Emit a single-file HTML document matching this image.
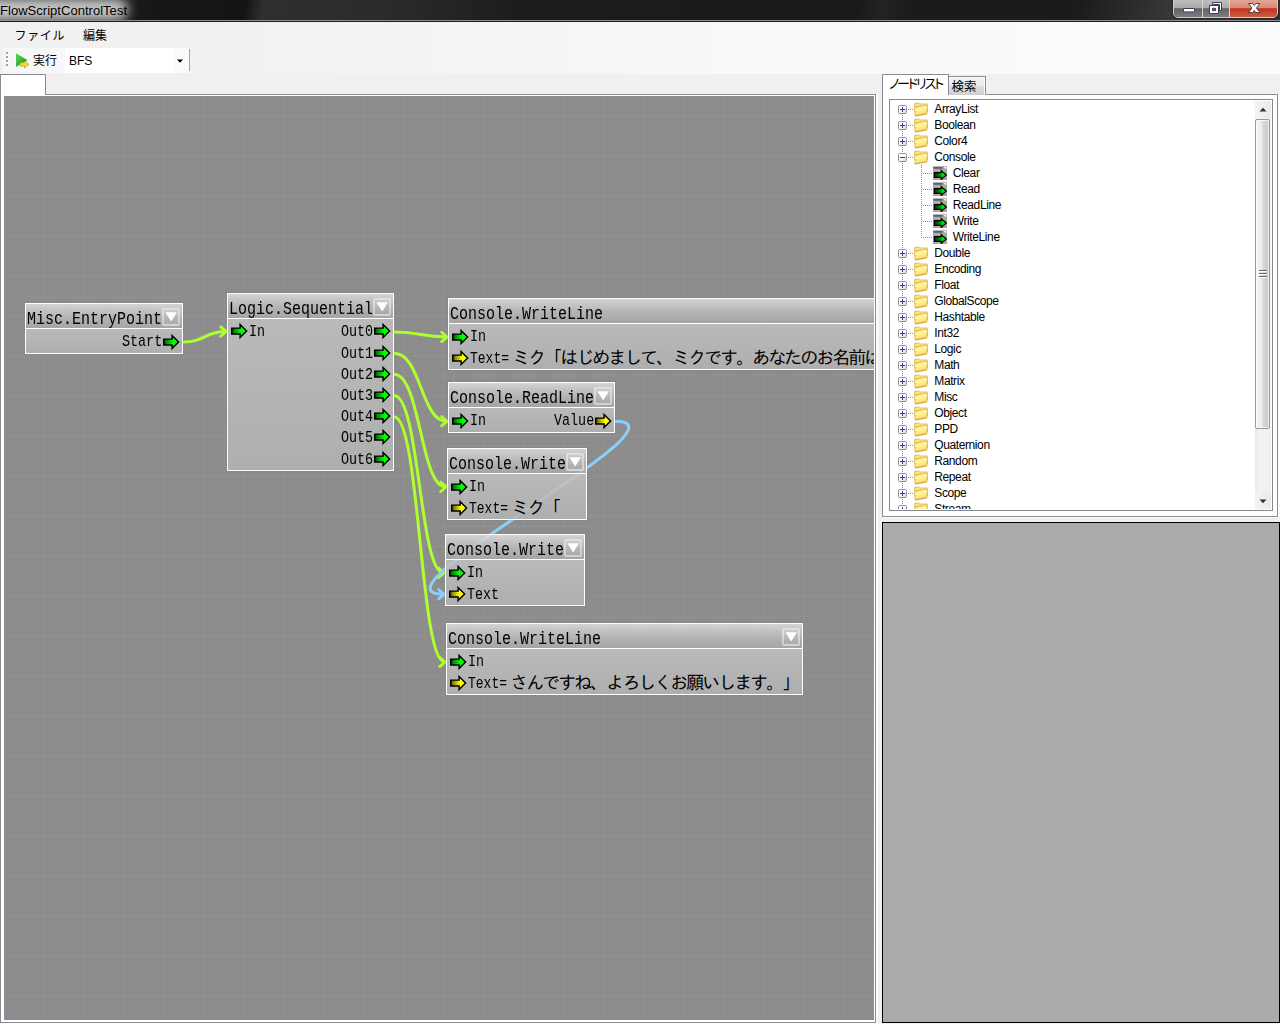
<!DOCTYPE html>
<html lang="ja"><head><meta charset="utf-8"><title>FlowScriptControlTest</title>
<style>
*{box-sizing:content-box;margin:0;padding:0}
html,body{width:1280px;height:1024px;overflow:hidden;background:#f0f0f0}
body{position:relative;font-family:"Liberation Sans","Noto Sans CJK JP",sans-serif;font-size:12px;color:#000}
.abs,#tb,#tb *,#menu,#tool,#tool *,#ltab,#lpage,#canvas,#rtab1,#rtab2,#rpage,#tree,#bottom{position:absolute}
/* title bar */
#tb{left:0;top:0;width:1280px;height:20px;overflow:hidden;
 background:linear-gradient(100deg,#2a2a2a 0,#171717 11.7%,#141414 19.2%,#2f2f2f 20.6%,#2b2b2b 30%,#1c1c1c 41%,#1a1a1a 67%,#232323 68.8%,#1b1b1b 71%,#1b1b1b 84%,#383838 91.5%,#2c2c2c 100%)}
#tbl1{left:0;top:20px;width:1280px;height:1px;background:#8d8d8d;position:absolute}
#tbl2{left:0;top:21px;width:1280px;height:1px;background:#1e1e1e;position:absolute}
#glow{left:-30px;top:-2px;width:158px;height:23px;border-radius:11px;background:rgba(255,255,255,.74);filter:blur(6px)}
#ttl{left:0;top:0;font-size:13px;line-height:21px;letter-spacing:.03px;white-space:nowrap}
#wb{left:1173px;top:-4px;width:103px;height:20px;border:1px solid rgba(255,255,255,.75);border-radius:0 0 5px 5px;box-shadow:0 0 0 1px #2a2a2a;overflow:hidden}
#wb div{top:0;height:21px}
#bmin{left:0;width:28px;background:linear-gradient(#c6c6c6 0,#a9a9a9 54%,#636366 55%,#808084 100%)}
#bmax{left:29px;width:26px;background:linear-gradient(#c6c6c6 0,#a9a9a9 54%,#636366 55%,#808084 100%)}
#bcls{left:56px;width:47px;background:linear-gradient(#e8b0a2 0,#d88775 54%,#bc3418 55%,#d0634a 100%)}
#wb i{position:absolute;top:0;width:1px;height:21px;background:rgba(255,255,255,.8)}
/* menu + toolbar */
#menu{left:0;top:22px;width:1280px;height:52px;background:linear-gradient(90deg,#f0f0f0 0,#f2f2f2 25%,#f8f8f8 55%,#fcfcfc 100%)}
.mi{position:absolute;top:3.5px;line-height:20px;white-space:nowrap}
#tool{left:3px;top:48px;width:186px;height:25px;background:linear-gradient(90deg,#f6f6f6,#fbfbfb);border-radius:3px 0 0 0}
#grip i{position:absolute;left:3px;width:2px;height:2px;background:#a0a0a0;box-shadow:1px 1px 0 #fff}
#combo{left:62px;top:0;width:109px;height:25px;background:#fff}
#cbtn{left:171px;top:0;width:12px;height:25px;background:#fbfbfb}
#sep{left:186px;top:1px;width:1px;height:22px;background:#a5a5a5}
/* tabs left */
#lpage{left:0;top:94px;width:874px;height:927px;border:1px solid #898c95;border-width:1px 1px 1px 1px;background:#fff}
#ltab{left:0;top:74px;width:44px;height:20px;border:1px solid #898c95;border-bottom:none;background:#fff}
#lsh{position:absolute;left:876px;top:95px;width:2px;height:929px;background:#fcfcfc}#lsh2{position:absolute;left:1px;top:1023px;width:877px;height:1px;background:#fcfcfc}
#canvas{left:4px;top:96px;width:870px;height:924px;overflow:hidden;background-color:#8c8c8c;
 background-image:linear-gradient(90deg,rgba(255,255,255,.017) 1px,transparent 1px,transparent 9px,rgba(255,255,255,.017) 9px),linear-gradient(180deg,rgba(255,255,255,.027) 1px,transparent 1px,transparent 9px,rgba(255,255,255,.027) 9px);
 background-size:10px 10px;background-position:0 0}
#wires{position:absolute;left:0;top:0}
/* nodes */
.node{position:absolute;border:1px solid #fff;overflow:hidden;box-shadow:0 0 0 1px rgba(0,0,0,.035)}
.hd{position:absolute;left:0;top:0;right:0;height:24px;background:linear-gradient(rgba(224,224,224,.84),rgba(187,187,187,.84) 55%,rgba(169,169,169,.84));border-bottom:1px solid #fff}
.bd{position:absolute;left:0;top:25px;right:0;background:linear-gradient(rgba(194,194,194,.84),rgba(181,181,181,.84))}
.m,.j{position:absolute;white-space:pre;line-height:24px;font-family:"Liberation Mono","IPAGothic",monospace;color:#000}
.m{transform:scaleX(.8);transform-origin:0 0}
.ar{position:absolute}
.dd{position:absolute;width:14px;height:14px;border:2px solid rgba(255,255,255,.42);border-radius:2px;background:linear-gradient(rgba(255,255,255,.12),rgba(255,255,255,0))}
.dd svg{position:absolute;left:-2px;top:-2px}
/* right tab control */
#rpage{left:882px;top:94px;width:394px;height:421px;border:1px solid #898c95;background:#fff}
#rtab1{left:882px;top:74px;width:65px;height:20px;border:1px solid #898c95;border-bottom:none;background:#fff}
#rtab2{left:948px;top:76px;width:37px;height:18px;border:1px solid #898c95;border-left:none;border-bottom:none;background:linear-gradient(#f2f2f2 0,#ebebeb 48%,#dddddd 52%,#cfcfcf 100%);box-shadow:inset 1px 1px 0 #fcfcfc,inset -1px 0 0 #fcfcfc}
.tt{position:absolute;white-space:nowrap;line-height:16px;font-size:12px}
#tree{left:889px;top:99px;width:382px;height:410px;border:1px solid #828790;background:#fff;overflow:hidden}
.tl{position:absolute;white-space:nowrap;font-size:12px;line-height:17px;letter-spacing:-.4px;height:16px}
.fo{position:absolute}
.pm{position:absolute;width:7px;height:7px;border:1px solid #919191;border-radius:1.5px;background:linear-gradient(135deg,#fff 0,#fff 40%,#d9d9d9 100%)}
.pm .h{position:absolute;left:1px;top:3px;width:5px;height:1px;background:#2b3f9e}
.pm .v{position:absolute;left:3px;top:1px;width:1px;height:5px;background:#2b3f9e}
.dh{position:absolute;height:1px;background-image:linear-gradient(90deg,#8a8a8a 1px,transparent 1px);background-size:2px 1px}
.dv{position:absolute;width:1px;background-image:linear-gradient(180deg,#8a8a8a 1px,transparent 1px);background-size:1px 2px}
#tin{position:absolute;left:1px;top:1px;width:363px;height:408px;overflow:hidden}
#sb{position:absolute;left:365px;top:1px;width:16px;height:408px;background:linear-gradient(90deg,#e9e9e9,#f3f3f3 30%,#f0f0f0)}
#sbup,#sbdn{position:absolute;left:0;width:16px;height:17px;background:linear-gradient(90deg,#f3f3f3,#eaeaea)}
#thumb{position:absolute;left:0;top:18px;width:13px;height:308px;border:1px solid #979797;border-radius:2px;background:linear-gradient(90deg,#f5f5f5 0,#ebebeb 45%,#d6d6d9 55%,#c9c9cc 100%);box-shadow:inset 0 0 0 1px rgba(255,255,255,.7)}
#rsh{position:absolute;left:1278px;top:95px;width:2px;height:423px;background:#fcfcfc}#rsh2{position:absolute;left:883px;top:517px;width:397px;height:1px;background:#fcfcfc}
#bottom{left:882px;top:522px;width:396px;height:499px;border:1px solid #000;background:#ababab}
</style></head><body>
<svg width="0" height="0" style="position:absolute"><defs>
<linearGradient id="gG" x1="0" x2="1" y1="0" y2="0"><stop offset="0" stop-color="#003800"/><stop offset=".18" stop-color="#008a00"/><stop offset=".62" stop-color="#00ff00"/><stop offset="1" stop-color="#00ff00"/></linearGradient>
<linearGradient id="gY" x1="0" x2="1" y1="0" y2="0"><stop offset="0" stop-color="#383800"/><stop offset=".18" stop-color="#8a8a00"/><stop offset=".62" stop-color="#ffff00"/><stop offset="1" stop-color="#ffff00"/></linearGradient>
<linearGradient id="gF" x1="0" x2=".25" y1="0" y2="1"><stop offset="0" stop-color="#fffcc8"/><stop offset=".5" stop-color="#fff39a"/><stop offset="1" stop-color="#f6d766"/></linearGradient><linearGradient id="gB" x1="0" x2="0" y1="0" y2="1"><stop offset="0" stop-color="#f2d462"/><stop offset="1" stop-color="#e2b040"/></linearGradient><linearGradient id="gG2" x1="0" x2="1" y1="0" y2="0"><stop offset="0" stop-color="#003000"/><stop offset=".3" stop-color="#006a00"/><stop offset=".78" stop-color="#00ee00"/><stop offset="1" stop-color="#00b400"/></linearGradient>
</defs></svg>
<!-- title bar -->
<div id="tb"><div id="glow"></div><div id="ttl">FlowScriptControlTest</div>
<div id="wb"><div id="bmin"></div><div id="bmax"></div><div id="bcls"></div><i style="left:28px"></i><i style="left:55px"></i>
<svg style="position:absolute;left:0;top:0" width="103" height="21" viewBox="0 0 103 21">
<rect x="9.5" y="11.5" width="11" height="3.4" rx=".6" fill="#fff" stroke="#3a3f55" stroke-width="1"/>
<path d="M38.5 5.5H47.5V13.5H45.5V7.5H38.5Z" fill="#fff" stroke="#3a3f55" stroke-width="1"/>
<path d="M35.5 8.5H44.5V16.5H35.5ZM38.5 11.3V13.7H41.5V11.3Z" fill="#fff" stroke="#3a3f55" stroke-width="1" fill-rule="evenodd"/>
<path d="M74.5 6.5H78.7L80.2 8.5L81.7 6.5H85.9L82.4 11L85.9 15.5H81.7L80.2 13.5L78.7 15.5H74.5L78 11Z" fill="#fff" stroke="#50404a" stroke-width="1" stroke-linejoin="round"/>
</svg></div></div>
<div id="tbl1"></div><div id="tbl2"></div>
<!-- menu & toolbar -->
<div id="menu"><span class="mi" style="left:14.6px;letter-spacing:.6px">ファイル</span><span class="mi" style="left:83px">編集</span></div>
<div id="tool"><div id="grip"><i style="top:4px"></i><i style="top:8px"></i><i style="top:12px"></i><i style="top:16px"></i></div>
<svg style="left:12px;top:4px" width="18" height="18" viewBox="0 0 18 18"><defs><linearGradient id="gP" x1="0" x2="1" y1="0" y2="1"><stop offset="0" stop-color="#5fd35f"/><stop offset="1" stop-color="#0a9a0a"/></linearGradient></defs>
<path d="M1 1.2L12.6 8.2L1 15Z" fill="url(#gP)"/><path d="M5.2 10.6H9.6V8.8L14 12.4L9.6 16V14.2H5.2Z" fill="#f2d936" stroke="#9a8a20" stroke-width=".5"/></svg>
<span class="mi" style="left:30px;top:3px">実行</span>
<div id="combo"><span class="mi" style="left:4px;top:3px">BFS</span></div><div id="cbtn"><svg style="left:2px;top:11px" width="8" height="5" viewBox="0 0 8 5"><path d="M1 .5H7L4 3.8Z" fill="#000"/></svg></div>
<div id="sep"></div></div>
<!-- left tab + canvas -->
<div id="lpage"></div><div id="ltab"></div><div id="lsh"></div><div id="lsh2"></div>
<div id="canvas">
<svg id="wires" width="870" height="924" viewBox="0 0 870 924"><path d="M179.0 246.0C201.0 246.0 201.0 235.6 221.5 235.6" stroke="#adff2f" stroke-width="3" fill="none"/><path d="M216.6 230.9L222.2 235.6L216.6 240.3" stroke="#adff2f" stroke-width="2.8" fill="none" stroke-linecap="round" stroke-linejoin="miter"/><path d="M390.0 236.0C417.0 236.0 417.0 240.9 442.5 240.9" stroke="#adff2f" stroke-width="3" fill="none"/><path d="M437.6 236.2L443.2 240.9L437.6 245.6" stroke="#adff2f" stroke-width="2.8" fill="none" stroke-linecap="round" stroke-linejoin="miter"/><path d="M390.0 257.2C417.0 257.2 417.0 325.2 442.5 325.2" stroke="#adff2f" stroke-width="3" fill="none"/><path d="M437.6 320.5L443.2 325.2L437.6 329.9" stroke="#adff2f" stroke-width="2.8" fill="none" stroke-linecap="round" stroke-linejoin="miter"/><path d="M390.0 278.3C416.5 278.3 416.5 390.8 441.5 390.8" stroke="#adff2f" stroke-width="3" fill="none"/><path d="M436.6 386.1L442.2 390.8L436.6 395.5" stroke="#adff2f" stroke-width="2.8" fill="none" stroke-linecap="round" stroke-linejoin="miter"/><path d="M390.0 299.5C415.5 299.5 415.5 476.8 439.5 476.8" stroke="#adff2f" stroke-width="3" fill="none"/><path d="M434.6 472.1L440.2 476.8L434.6 481.5" stroke="#adff2f" stroke-width="2.8" fill="none" stroke-linecap="round" stroke-linejoin="miter"/><path d="M390.0 320.7C416.0 320.7 416.0 565.9 440.5 565.9" stroke="#adff2f" stroke-width="3" fill="none"/><path d="M435.6 561.2L441.2 565.9L435.6 570.6" stroke="#adff2f" stroke-width="2.8" fill="none" stroke-linecap="round" stroke-linejoin="miter"/><path d="M611.0 325.2C696.0 325.2 356.0 498.2 439.5 498.2" stroke="#8ad0fc" stroke-width="3" fill="none"/><path d="M434.6 493.5L440.2 498.2L434.6 502.9" stroke="#8ad0fc" stroke-width="2.8" fill="none" stroke-linecap="round" stroke-linejoin="miter"/></svg>
<div class="node" style="left:21px;top:207px;width:156px;height:49px"><div class="hd"></div><div class="bd" style="height:24px"></div><span class="m t" style="left:0.90px;top:4px;font-size:18.747px;line-height:22.008px">Misc.EntryPoint</span><div class="dd" style="left:136px;top:4px"><svg width="18" height="18" viewBox="0 0 18 18"><path d="M3.4 4.2H15L9.2 13.4Z" fill="#fff"/></svg></div><svg class="ar" style="left:136.8px;top:28.8px" width="18" height="18" viewBox="0 0 18 18"><path d="M.7 6.1H9.1V2.6L15.6 9L9.1 15.4V11.9H.7Z" fill="url(#gG)" stroke="#000" stroke-width="1.45" stroke-linejoin="miter"/></svg><span class="m " style="left:96.25px;top:26px;font-size:16.768px;line-height:23.063px">Start</span></div>
<div class="node" style="left:223px;top:197px;width:165px;height:176px"><div class="hd"></div><div class="bd" style="height:151px"></div><span class="m t" style="left:0.90px;top:4px;font-size:18.747px;line-height:22.008px">Logic.Sequential</span><div class="dd" style="left:145px;top:4px"><svg width="18" height="18" viewBox="0 0 18 18"><path d="M3.4 4.2H15L9.2 13.4Z" fill="#fff"/></svg></div><svg class="ar" style="left:3.1px;top:28.3px" width="18" height="18" viewBox="0 0 18 18"><path d="M.7 6.1H9.1V2.6L15.6 9L9.1 15.4V11.9H.7Z" fill="url(#gG)" stroke="#000" stroke-width="1.45" stroke-linejoin="miter"/></svg><span class="m " style="left:20.50px;top:26px;font-size:16.664px;line-height:23.118px">In</span><svg class="ar" style="left:145.8px;top:28.3px" width="18" height="18" viewBox="0 0 18 18"><path d="M.7 6.1H9.1V2.6L15.6 9L9.1 15.4V11.9H.7Z" fill="url(#gG)" stroke="#000" stroke-width="1.45" stroke-linejoin="miter"/></svg><span class="m " style="left:113.30px;top:26px;font-size:16.768px;line-height:23.063px">Out0</span><svg class="ar" style="left:145.8px;top:49.6px" width="18" height="18" viewBox="0 0 18 18"><path d="M.7 6.1H9.1V2.6L15.6 9L9.1 15.4V11.9H.7Z" fill="url(#gG)" stroke="#000" stroke-width="1.45" stroke-linejoin="miter"/></svg><span class="m " style="left:113.30px;top:48px;font-size:16.768px;line-height:23.063px">Out1</span><svg class="ar" style="left:145.8px;top:70.8px" width="18" height="18" viewBox="0 0 18 18"><path d="M.7 6.1H9.1V2.6L15.6 9L9.1 15.4V11.9H.7Z" fill="url(#gG)" stroke="#000" stroke-width="1.45" stroke-linejoin="miter"/></svg><span class="m " style="left:113.30px;top:69px;font-size:16.768px;line-height:23.063px">Out2</span><svg class="ar" style="left:145.8px;top:92.0px" width="18" height="18" viewBox="0 0 18 18"><path d="M.7 6.1H9.1V2.6L15.6 9L9.1 15.4V11.9H.7Z" fill="url(#gG)" stroke="#000" stroke-width="1.45" stroke-linejoin="miter"/></svg><span class="m " style="left:113.30px;top:90px;font-size:16.768px;line-height:23.063px">Out3</span><svg class="ar" style="left:145.8px;top:113.2px" width="18" height="18" viewBox="0 0 18 18"><path d="M.7 6.1H9.1V2.6L15.6 9L9.1 15.4V11.9H.7Z" fill="url(#gG)" stroke="#000" stroke-width="1.45" stroke-linejoin="miter"/></svg><span class="m " style="left:113.30px;top:111px;font-size:16.768px;line-height:23.063px">Out4</span><svg class="ar" style="left:145.8px;top:134.4px" width="18" height="18" viewBox="0 0 18 18"><path d="M.7 6.1H9.1V2.6L15.6 9L9.1 15.4V11.9H.7Z" fill="url(#gG)" stroke="#000" stroke-width="1.45" stroke-linejoin="miter"/></svg><span class="m " style="left:113.30px;top:132px;font-size:16.768px;line-height:23.063px">Out5</span><svg class="ar" style="left:145.8px;top:155.6px" width="18" height="18" viewBox="0 0 18 18"><path d="M.7 6.1H9.1V2.6L15.6 9L9.1 15.4V11.9H.7Z" fill="url(#gG)" stroke="#000" stroke-width="1.45" stroke-linejoin="miter"/></svg><span class="m " style="left:113.30px;top:154px;font-size:16.768px;line-height:23.063px">Out6</span></div>
<div class="node" style="left:444px;top:202px;width:518px;height:70px"><div class="hd"></div><div class="bd" style="height:45px"></div><span class="m t" style="left:0.90px;top:4px;font-size:18.747px;line-height:22.008px">Console.WriteLine</span><div class="dd" style="left:498px;top:4px"><svg width="18" height="18" viewBox="0 0 18 18"><path d="M3.4 4.2H15L9.2 13.4Z" fill="#fff"/></svg></div><svg class="ar" style="left:3.1px;top:28.6px" width="18" height="18" viewBox="0 0 18 18"><path d="M.7 6.1H9.1V2.6L15.6 9L9.1 15.4V11.9H.7Z" fill="url(#gG)" stroke="#000" stroke-width="1.45" stroke-linejoin="miter"/></svg><span class="m " style="left:20.50px;top:26px;font-size:16.664px;line-height:23.118px">In</span><svg class="ar" style="left:3.1px;top:49.9px" width="18" height="18" viewBox="0 0 18 18"><path d="M.7 6.1H9.1V2.6L15.6 9L9.1 15.4V11.9H.7Z" fill="url(#gY)" stroke="#000" stroke-width="1.45" stroke-linejoin="miter"/></svg><span class="m " style="left:20.50px;top:48px;font-size:16.247px;line-height:23.340px">Text= </span><span class="j" style="left:63.30px;top:49px;font-size:18.000px;line-height:22.406px;letter-spacing:-2.00px">ミク「はじめまして、ミクです。あなたのお名前は</span></div>
<div class="node" style="left:444px;top:286px;width:165px;height:49px"><div class="hd"></div><div class="bd" style="height:24px"></div><span class="m t" style="left:0.90px;top:4px;font-size:18.747px;line-height:22.008px">Console.ReadLine</span><div class="dd" style="left:145px;top:4px"><svg width="18" height="18" viewBox="0 0 18 18"><path d="M3.4 4.2H15L9.2 13.4Z" fill="#fff"/></svg></div><svg class="ar" style="left:3.1px;top:28.9px" width="18" height="18" viewBox="0 0 18 18"><path d="M.7 6.1H9.1V2.6L15.6 9L9.1 15.4V11.9H.7Z" fill="url(#gG)" stroke="#000" stroke-width="1.45" stroke-linejoin="miter"/></svg><span class="m " style="left:20.50px;top:26px;font-size:16.664px;line-height:23.118px">In</span><svg class="ar" style="left:145.8px;top:28.9px" width="18" height="18" viewBox="0 0 18 18"><path d="M.7 6.1H9.1V2.6L15.6 9L9.1 15.4V11.9H.7Z" fill="url(#gY)" stroke="#000" stroke-width="1.45" stroke-linejoin="miter"/></svg><span class="m " style="left:105.25px;top:26px;font-size:16.768px;line-height:23.063px">Value</span></div>
<div class="node" style="left:443px;top:352px;width:138px;height:70px"><div class="hd"></div><div class="bd" style="height:45px"></div><span class="m t" style="left:0.90px;top:4px;font-size:18.747px;line-height:22.008px">Console.Write</span><div class="dd" style="left:118px;top:4px"><svg width="18" height="18" viewBox="0 0 18 18"><path d="M3.4 4.2H15L9.2 13.4Z" fill="#fff"/></svg></div><svg class="ar" style="left:3.1px;top:28.5px" width="18" height="18" viewBox="0 0 18 18"><path d="M.7 6.1H9.1V2.6L15.6 9L9.1 15.4V11.9H.7Z" fill="url(#gG)" stroke="#000" stroke-width="1.45" stroke-linejoin="miter"/></svg><span class="m " style="left:20.50px;top:26px;font-size:16.664px;line-height:23.118px">In</span><svg class="ar" style="left:3.1px;top:49.9px" width="18" height="18" viewBox="0 0 18 18"><path d="M.7 6.1H9.1V2.6L15.6 9L9.1 15.4V11.9H.7Z" fill="url(#gY)" stroke="#000" stroke-width="1.45" stroke-linejoin="miter"/></svg><span class="m " style="left:20.50px;top:48px;font-size:16.247px;line-height:23.340px">Text= </span><span class="j" style="left:63.30px;top:49px;font-size:18.000px;line-height:22.406px;letter-spacing:-2.00px">ミク「</span></div>
<div class="node" style="left:441px;top:438px;width:138px;height:70px"><div class="hd"></div><div class="bd" style="height:45px"></div><span class="m t" style="left:0.90px;top:4px;font-size:18.747px;line-height:22.008px">Console.Write</span><div class="dd" style="left:118px;top:4px"><svg width="18" height="18" viewBox="0 0 18 18"><path d="M3.4 4.2H15L9.2 13.4Z" fill="#fff"/></svg></div><svg class="ar" style="left:3.1px;top:28.5px" width="18" height="18" viewBox="0 0 18 18"><path d="M.7 6.1H9.1V2.6L15.6 9L9.1 15.4V11.9H.7Z" fill="url(#gG)" stroke="#000" stroke-width="1.45" stroke-linejoin="miter"/></svg><span class="m " style="left:20.50px;top:26px;font-size:16.664px;line-height:23.118px">In</span><svg class="ar" style="left:3.1px;top:49.9px" width="18" height="18" viewBox="0 0 18 18"><path d="M.7 6.1H9.1V2.6L15.6 9L9.1 15.4V11.9H.7Z" fill="url(#gY)" stroke="#000" stroke-width="1.45" stroke-linejoin="miter"/></svg><span class="m " style="left:20.50px;top:48px;font-size:16.664px;line-height:23.118px">Text</span></div>
<div class="node" style="left:442px;top:527px;width:355px;height:70px"><div class="hd"></div><div class="bd" style="height:45px"></div><span class="m t" style="left:0.90px;top:4px;font-size:18.747px;line-height:22.008px">Console.WriteLine</span><div class="dd" style="left:335px;top:4px"><svg width="18" height="18" viewBox="0 0 18 18"><path d="M3.4 4.2H15L9.2 13.4Z" fill="#fff"/></svg></div><svg class="ar" style="left:3.1px;top:28.6px" width="18" height="18" viewBox="0 0 18 18"><path d="M.7 6.1H9.1V2.6L15.6 9L9.1 15.4V11.9H.7Z" fill="url(#gG)" stroke="#000" stroke-width="1.45" stroke-linejoin="miter"/></svg><span class="m " style="left:20.50px;top:26px;font-size:16.664px;line-height:23.118px">In</span><svg class="ar" style="left:3.1px;top:50.0px" width="18" height="18" viewBox="0 0 18 18"><path d="M.7 6.1H9.1V2.6L15.6 9L9.1 15.4V11.9H.7Z" fill="url(#gY)" stroke="#000" stroke-width="1.45" stroke-linejoin="miter"/></svg><span class="m " style="left:20.50px;top:48px;font-size:16.247px;line-height:23.340px">Text= </span><span class="j" style="left:63.30px;top:49px;font-size:18.000px;line-height:22.406px;letter-spacing:-2.00px">さんですね、よろしくお願いします。」</span></div>
</div>
<!-- right tab control -->
<div id="rpage"></div><div id="rtab2"><span class="tt" style="left:3.5px;top:1.5px;font-size:12.5px">検索</span></div>
<div id="rtab1"><span class="tt" style="left:6px;top:1px;font-size:13px;font-feature-settings:'palt';letter-spacing:-2.1px">ノードリスト</span></div>
<div id="tree"><div id="tin"><div class="dv" style="left:11px;top:14px;height:6px"></div><div class="dv" style="left:11px;top:30px;height:6px"></div><div class="dv" style="left:11px;top:46px;height:6px"></div><div class="dv" style="left:11px;top:62px;height:86px"></div><div class="dv" style="left:11px;top:158px;height:6px"></div><div class="dv" style="left:11px;top:174px;height:6px"></div><div class="dv" style="left:11px;top:190px;height:6px"></div><div class="dv" style="left:11px;top:206px;height:6px"></div><div class="dv" style="left:11px;top:222px;height:6px"></div><div class="dv" style="left:11px;top:238px;height:6px"></div><div class="dv" style="left:11px;top:254px;height:6px"></div><div class="dv" style="left:11px;top:270px;height:6px"></div><div class="dv" style="left:11px;top:286px;height:6px"></div><div class="dv" style="left:11px;top:302px;height:6px"></div><div class="dv" style="left:11px;top:318px;height:6px"></div><div class="dv" style="left:11px;top:334px;height:6px"></div><div class="dv" style="left:11px;top:350px;height:6px"></div><div class="dv" style="left:11px;top:366px;height:6px"></div><div class="dv" style="left:11px;top:382px;height:6px"></div><div class="dv" style="left:11px;top:398px;height:6px"></div><div class="dv" style="left:30px;top:64px;height:73px"></div><div class="pm" style="left:7px;top:4px"><i class="h"></i><i class="v"></i></div><div class="dh" style="left:17px;top:8px;width:6px"></div><svg class="fo" style="left:22px;top:0px" width="16" height="17" viewBox="0 0 16 17"><path d="M1.5 6V2.7L2.1 2H6.2L7 2.8H14L14.5 3.4V11H1.5Z" fill="url(#gB)" stroke="#d9a638" stroke-width=".4"/><path d="M2.3 3.5V2.9H5.9L6.5 3.7H13.6V4.8H2.3Z" fill="#fbe98e" opacity=".9"/><path d="M1.8 6.6L14.3 4.1L14.1 12.6L2.1 15Z" fill="url(#gF)" stroke="#e0b040" stroke-width=".7" stroke-linejoin="round"/><path d="M2.1 15.1L14.1 12.7" stroke="#cf9a2c" stroke-width=".8" fill="none"/></svg><span class="tl" style="left:43.3px;top:0px">ArrayList</span><div class="pm" style="left:7px;top:20px"><i class="h"></i><i class="v"></i></div><div class="dh" style="left:17px;top:24px;width:6px"></div><svg class="fo" style="left:22px;top:16px" width="16" height="17" viewBox="0 0 16 17"><path d="M1.5 6V2.7L2.1 2H6.2L7 2.8H14L14.5 3.4V11H1.5Z" fill="url(#gB)" stroke="#d9a638" stroke-width=".4"/><path d="M2.3 3.5V2.9H5.9L6.5 3.7H13.6V4.8H2.3Z" fill="#fbe98e" opacity=".9"/><path d="M1.8 6.6L14.3 4.1L14.1 12.6L2.1 15Z" fill="url(#gF)" stroke="#e0b040" stroke-width=".7" stroke-linejoin="round"/><path d="M2.1 15.1L14.1 12.7" stroke="#cf9a2c" stroke-width=".8" fill="none"/></svg><span class="tl" style="left:43.3px;top:16px">Boolean</span><div class="pm" style="left:7px;top:36px"><i class="h"></i><i class="v"></i></div><div class="dh" style="left:17px;top:40px;width:6px"></div><svg class="fo" style="left:22px;top:32px" width="16" height="17" viewBox="0 0 16 17"><path d="M1.5 6V2.7L2.1 2H6.2L7 2.8H14L14.5 3.4V11H1.5Z" fill="url(#gB)" stroke="#d9a638" stroke-width=".4"/><path d="M2.3 3.5V2.9H5.9L6.5 3.7H13.6V4.8H2.3Z" fill="#fbe98e" opacity=".9"/><path d="M1.8 6.6L14.3 4.1L14.1 12.6L2.1 15Z" fill="url(#gF)" stroke="#e0b040" stroke-width=".7" stroke-linejoin="round"/><path d="M2.1 15.1L14.1 12.7" stroke="#cf9a2c" stroke-width=".8" fill="none"/></svg><span class="tl" style="left:43.3px;top:32px">Color4</span><div class="pm" style="left:7px;top:52px"><i class="h"></i></div><div class="dh" style="left:17px;top:56px;width:6px"></div><svg class="fo" style="left:22px;top:48px" width="16" height="17" viewBox="0 0 16 17"><path d="M1.5 6V2.7L2.1 2H6.2L7 2.8H14L14.5 3.4V11H1.5Z" fill="url(#gB)" stroke="#d9a638" stroke-width=".4"/><path d="M2.3 3.5V2.9H5.9L6.5 3.7H13.6V4.8H2.3Z" fill="#fbe98e" opacity=".9"/><path d="M1.8 6.6L14.3 4.1L14.1 12.6L2.1 15Z" fill="url(#gF)" stroke="#e0b040" stroke-width=".7" stroke-linejoin="round"/><path d="M2.1 15.1L14.1 12.7" stroke="#cf9a2c" stroke-width=".8" fill="none"/></svg><span class="tl" style="left:43.3px;top:48px">Console</span><div class="dh" style="left:32px;top:72px;width:10px"></div><svg class="fo" style="left:42px;top:65px" width="14" height="14" viewBox="0 0 14 14"><rect width="14" height="14" fill="#a6a6a6"/><rect y="0" width="14" height="1" fill="#bababa"/><rect x=".3" y="1.2" width="9.2" height="1.4" fill="#505050"/><path d="M10.6 1H13.4V2.8H12Z" fill="#f2f2f2"/><rect x="1" y="4" width="7" height="1" fill="#b4b4b4"/><rect x="1" y="12.4" width="7" height="1" fill="#b4b4b4"/><path d="M1.4 6.6H8.2V4.6L13.4 9L8.2 13.4V11.4H1.4Z" fill="url(#gG2)" stroke="#0a000a" stroke-width="1.25" stroke-linejoin="miter"/></svg><span class="tl" style="left:61.8px;top:64px">Clear</span><div class="dh" style="left:32px;top:88px;width:10px"></div><svg class="fo" style="left:42px;top:81px" width="14" height="14" viewBox="0 0 14 14"><rect width="14" height="14" fill="#a6a6a6"/><rect y="0" width="14" height="1" fill="#bababa"/><rect x=".3" y="1.2" width="9.2" height="1.4" fill="#505050"/><path d="M10.6 1H13.4V2.8H12Z" fill="#f2f2f2"/><rect x="1" y="4" width="7" height="1" fill="#b4b4b4"/><rect x="1" y="12.4" width="7" height="1" fill="#b4b4b4"/><path d="M1.4 6.6H8.2V4.6L13.4 9L8.2 13.4V11.4H1.4Z" fill="url(#gG2)" stroke="#0a000a" stroke-width="1.25" stroke-linejoin="miter"/></svg><span class="tl" style="left:61.8px;top:80px">Read</span><div class="dh" style="left:32px;top:104px;width:10px"></div><svg class="fo" style="left:42px;top:97px" width="14" height="14" viewBox="0 0 14 14"><rect width="14" height="14" fill="#a6a6a6"/><rect y="0" width="14" height="1" fill="#bababa"/><rect x=".3" y="1.2" width="9.2" height="1.4" fill="#505050"/><path d="M10.6 1H13.4V2.8H12Z" fill="#f2f2f2"/><rect x="1" y="4" width="7" height="1" fill="#b4b4b4"/><rect x="1" y="12.4" width="7" height="1" fill="#b4b4b4"/><path d="M1.4 6.6H8.2V4.6L13.4 9L8.2 13.4V11.4H1.4Z" fill="url(#gG2)" stroke="#0a000a" stroke-width="1.25" stroke-linejoin="miter"/></svg><span class="tl" style="left:61.8px;top:96px">ReadLine</span><div class="dh" style="left:32px;top:120px;width:10px"></div><svg class="fo" style="left:42px;top:113px" width="14" height="14" viewBox="0 0 14 14"><rect width="14" height="14" fill="#a6a6a6"/><rect y="0" width="14" height="1" fill="#bababa"/><rect x=".3" y="1.2" width="9.2" height="1.4" fill="#505050"/><path d="M10.6 1H13.4V2.8H12Z" fill="#f2f2f2"/><rect x="1" y="4" width="7" height="1" fill="#b4b4b4"/><rect x="1" y="12.4" width="7" height="1" fill="#b4b4b4"/><path d="M1.4 6.6H8.2V4.6L13.4 9L8.2 13.4V11.4H1.4Z" fill="url(#gG2)" stroke="#0a000a" stroke-width="1.25" stroke-linejoin="miter"/></svg><span class="tl" style="left:61.8px;top:112px">Write</span><div class="dh" style="left:32px;top:136px;width:10px"></div><svg class="fo" style="left:42px;top:129px" width="14" height="14" viewBox="0 0 14 14"><rect width="14" height="14" fill="#a6a6a6"/><rect y="0" width="14" height="1" fill="#bababa"/><rect x=".3" y="1.2" width="9.2" height="1.4" fill="#505050"/><path d="M10.6 1H13.4V2.8H12Z" fill="#f2f2f2"/><rect x="1" y="4" width="7" height="1" fill="#b4b4b4"/><rect x="1" y="12.4" width="7" height="1" fill="#b4b4b4"/><path d="M1.4 6.6H8.2V4.6L13.4 9L8.2 13.4V11.4H1.4Z" fill="url(#gG2)" stroke="#0a000a" stroke-width="1.25" stroke-linejoin="miter"/></svg><span class="tl" style="left:61.8px;top:128px">WriteLine</span><div class="pm" style="left:7px;top:148px"><i class="h"></i><i class="v"></i></div><div class="dh" style="left:17px;top:152px;width:6px"></div><svg class="fo" style="left:22px;top:144px" width="16" height="17" viewBox="0 0 16 17"><path d="M1.5 6V2.7L2.1 2H6.2L7 2.8H14L14.5 3.4V11H1.5Z" fill="url(#gB)" stroke="#d9a638" stroke-width=".4"/><path d="M2.3 3.5V2.9H5.9L6.5 3.7H13.6V4.8H2.3Z" fill="#fbe98e" opacity=".9"/><path d="M1.8 6.6L14.3 4.1L14.1 12.6L2.1 15Z" fill="url(#gF)" stroke="#e0b040" stroke-width=".7" stroke-linejoin="round"/><path d="M2.1 15.1L14.1 12.7" stroke="#cf9a2c" stroke-width=".8" fill="none"/></svg><span class="tl" style="left:43.3px;top:144px">Double</span><div class="pm" style="left:7px;top:164px"><i class="h"></i><i class="v"></i></div><div class="dh" style="left:17px;top:168px;width:6px"></div><svg class="fo" style="left:22px;top:160px" width="16" height="17" viewBox="0 0 16 17"><path d="M1.5 6V2.7L2.1 2H6.2L7 2.8H14L14.5 3.4V11H1.5Z" fill="url(#gB)" stroke="#d9a638" stroke-width=".4"/><path d="M2.3 3.5V2.9H5.9L6.5 3.7H13.6V4.8H2.3Z" fill="#fbe98e" opacity=".9"/><path d="M1.8 6.6L14.3 4.1L14.1 12.6L2.1 15Z" fill="url(#gF)" stroke="#e0b040" stroke-width=".7" stroke-linejoin="round"/><path d="M2.1 15.1L14.1 12.7" stroke="#cf9a2c" stroke-width=".8" fill="none"/></svg><span class="tl" style="left:43.3px;top:160px">Encoding</span><div class="pm" style="left:7px;top:180px"><i class="h"></i><i class="v"></i></div><div class="dh" style="left:17px;top:184px;width:6px"></div><svg class="fo" style="left:22px;top:176px" width="16" height="17" viewBox="0 0 16 17"><path d="M1.5 6V2.7L2.1 2H6.2L7 2.8H14L14.5 3.4V11H1.5Z" fill="url(#gB)" stroke="#d9a638" stroke-width=".4"/><path d="M2.3 3.5V2.9H5.9L6.5 3.7H13.6V4.8H2.3Z" fill="#fbe98e" opacity=".9"/><path d="M1.8 6.6L14.3 4.1L14.1 12.6L2.1 15Z" fill="url(#gF)" stroke="#e0b040" stroke-width=".7" stroke-linejoin="round"/><path d="M2.1 15.1L14.1 12.7" stroke="#cf9a2c" stroke-width=".8" fill="none"/></svg><span class="tl" style="left:43.3px;top:176px">Float</span><div class="pm" style="left:7px;top:196px"><i class="h"></i><i class="v"></i></div><div class="dh" style="left:17px;top:200px;width:6px"></div><svg class="fo" style="left:22px;top:192px" width="16" height="17" viewBox="0 0 16 17"><path d="M1.5 6V2.7L2.1 2H6.2L7 2.8H14L14.5 3.4V11H1.5Z" fill="url(#gB)" stroke="#d9a638" stroke-width=".4"/><path d="M2.3 3.5V2.9H5.9L6.5 3.7H13.6V4.8H2.3Z" fill="#fbe98e" opacity=".9"/><path d="M1.8 6.6L14.3 4.1L14.1 12.6L2.1 15Z" fill="url(#gF)" stroke="#e0b040" stroke-width=".7" stroke-linejoin="round"/><path d="M2.1 15.1L14.1 12.7" stroke="#cf9a2c" stroke-width=".8" fill="none"/></svg><span class="tl" style="left:43.3px;top:192px">GlobalScope</span><div class="pm" style="left:7px;top:212px"><i class="h"></i><i class="v"></i></div><div class="dh" style="left:17px;top:216px;width:6px"></div><svg class="fo" style="left:22px;top:208px" width="16" height="17" viewBox="0 0 16 17"><path d="M1.5 6V2.7L2.1 2H6.2L7 2.8H14L14.5 3.4V11H1.5Z" fill="url(#gB)" stroke="#d9a638" stroke-width=".4"/><path d="M2.3 3.5V2.9H5.9L6.5 3.7H13.6V4.8H2.3Z" fill="#fbe98e" opacity=".9"/><path d="M1.8 6.6L14.3 4.1L14.1 12.6L2.1 15Z" fill="url(#gF)" stroke="#e0b040" stroke-width=".7" stroke-linejoin="round"/><path d="M2.1 15.1L14.1 12.7" stroke="#cf9a2c" stroke-width=".8" fill="none"/></svg><span class="tl" style="left:43.3px;top:208px">Hashtable</span><div class="pm" style="left:7px;top:228px"><i class="h"></i><i class="v"></i></div><div class="dh" style="left:17px;top:232px;width:6px"></div><svg class="fo" style="left:22px;top:224px" width="16" height="17" viewBox="0 0 16 17"><path d="M1.5 6V2.7L2.1 2H6.2L7 2.8H14L14.5 3.4V11H1.5Z" fill="url(#gB)" stroke="#d9a638" stroke-width=".4"/><path d="M2.3 3.5V2.9H5.9L6.5 3.7H13.6V4.8H2.3Z" fill="#fbe98e" opacity=".9"/><path d="M1.8 6.6L14.3 4.1L14.1 12.6L2.1 15Z" fill="url(#gF)" stroke="#e0b040" stroke-width=".7" stroke-linejoin="round"/><path d="M2.1 15.1L14.1 12.7" stroke="#cf9a2c" stroke-width=".8" fill="none"/></svg><span class="tl" style="left:43.3px;top:224px">Int32</span><div class="pm" style="left:7px;top:244px"><i class="h"></i><i class="v"></i></div><div class="dh" style="left:17px;top:248px;width:6px"></div><svg class="fo" style="left:22px;top:240px" width="16" height="17" viewBox="0 0 16 17"><path d="M1.5 6V2.7L2.1 2H6.2L7 2.8H14L14.5 3.4V11H1.5Z" fill="url(#gB)" stroke="#d9a638" stroke-width=".4"/><path d="M2.3 3.5V2.9H5.9L6.5 3.7H13.6V4.8H2.3Z" fill="#fbe98e" opacity=".9"/><path d="M1.8 6.6L14.3 4.1L14.1 12.6L2.1 15Z" fill="url(#gF)" stroke="#e0b040" stroke-width=".7" stroke-linejoin="round"/><path d="M2.1 15.1L14.1 12.7" stroke="#cf9a2c" stroke-width=".8" fill="none"/></svg><span class="tl" style="left:43.3px;top:240px">Logic</span><div class="pm" style="left:7px;top:260px"><i class="h"></i><i class="v"></i></div><div class="dh" style="left:17px;top:264px;width:6px"></div><svg class="fo" style="left:22px;top:256px" width="16" height="17" viewBox="0 0 16 17"><path d="M1.5 6V2.7L2.1 2H6.2L7 2.8H14L14.5 3.4V11H1.5Z" fill="url(#gB)" stroke="#d9a638" stroke-width=".4"/><path d="M2.3 3.5V2.9H5.9L6.5 3.7H13.6V4.8H2.3Z" fill="#fbe98e" opacity=".9"/><path d="M1.8 6.6L14.3 4.1L14.1 12.6L2.1 15Z" fill="url(#gF)" stroke="#e0b040" stroke-width=".7" stroke-linejoin="round"/><path d="M2.1 15.1L14.1 12.7" stroke="#cf9a2c" stroke-width=".8" fill="none"/></svg><span class="tl" style="left:43.3px;top:256px">Math</span><div class="pm" style="left:7px;top:276px"><i class="h"></i><i class="v"></i></div><div class="dh" style="left:17px;top:280px;width:6px"></div><svg class="fo" style="left:22px;top:272px" width="16" height="17" viewBox="0 0 16 17"><path d="M1.5 6V2.7L2.1 2H6.2L7 2.8H14L14.5 3.4V11H1.5Z" fill="url(#gB)" stroke="#d9a638" stroke-width=".4"/><path d="M2.3 3.5V2.9H5.9L6.5 3.7H13.6V4.8H2.3Z" fill="#fbe98e" opacity=".9"/><path d="M1.8 6.6L14.3 4.1L14.1 12.6L2.1 15Z" fill="url(#gF)" stroke="#e0b040" stroke-width=".7" stroke-linejoin="round"/><path d="M2.1 15.1L14.1 12.7" stroke="#cf9a2c" stroke-width=".8" fill="none"/></svg><span class="tl" style="left:43.3px;top:272px">Matrix</span><div class="pm" style="left:7px;top:292px"><i class="h"></i><i class="v"></i></div><div class="dh" style="left:17px;top:296px;width:6px"></div><svg class="fo" style="left:22px;top:288px" width="16" height="17" viewBox="0 0 16 17"><path d="M1.5 6V2.7L2.1 2H6.2L7 2.8H14L14.5 3.4V11H1.5Z" fill="url(#gB)" stroke="#d9a638" stroke-width=".4"/><path d="M2.3 3.5V2.9H5.9L6.5 3.7H13.6V4.8H2.3Z" fill="#fbe98e" opacity=".9"/><path d="M1.8 6.6L14.3 4.1L14.1 12.6L2.1 15Z" fill="url(#gF)" stroke="#e0b040" stroke-width=".7" stroke-linejoin="round"/><path d="M2.1 15.1L14.1 12.7" stroke="#cf9a2c" stroke-width=".8" fill="none"/></svg><span class="tl" style="left:43.3px;top:288px">Misc</span><div class="pm" style="left:7px;top:308px"><i class="h"></i><i class="v"></i></div><div class="dh" style="left:17px;top:312px;width:6px"></div><svg class="fo" style="left:22px;top:304px" width="16" height="17" viewBox="0 0 16 17"><path d="M1.5 6V2.7L2.1 2H6.2L7 2.8H14L14.5 3.4V11H1.5Z" fill="url(#gB)" stroke="#d9a638" stroke-width=".4"/><path d="M2.3 3.5V2.9H5.9L6.5 3.7H13.6V4.8H2.3Z" fill="#fbe98e" opacity=".9"/><path d="M1.8 6.6L14.3 4.1L14.1 12.6L2.1 15Z" fill="url(#gF)" stroke="#e0b040" stroke-width=".7" stroke-linejoin="round"/><path d="M2.1 15.1L14.1 12.7" stroke="#cf9a2c" stroke-width=".8" fill="none"/></svg><span class="tl" style="left:43.3px;top:304px">Object</span><div class="pm" style="left:7px;top:324px"><i class="h"></i><i class="v"></i></div><div class="dh" style="left:17px;top:328px;width:6px"></div><svg class="fo" style="left:22px;top:320px" width="16" height="17" viewBox="0 0 16 17"><path d="M1.5 6V2.7L2.1 2H6.2L7 2.8H14L14.5 3.4V11H1.5Z" fill="url(#gB)" stroke="#d9a638" stroke-width=".4"/><path d="M2.3 3.5V2.9H5.9L6.5 3.7H13.6V4.8H2.3Z" fill="#fbe98e" opacity=".9"/><path d="M1.8 6.6L14.3 4.1L14.1 12.6L2.1 15Z" fill="url(#gF)" stroke="#e0b040" stroke-width=".7" stroke-linejoin="round"/><path d="M2.1 15.1L14.1 12.7" stroke="#cf9a2c" stroke-width=".8" fill="none"/></svg><span class="tl" style="left:43.3px;top:320px">PPD</span><div class="pm" style="left:7px;top:340px"><i class="h"></i><i class="v"></i></div><div class="dh" style="left:17px;top:344px;width:6px"></div><svg class="fo" style="left:22px;top:336px" width="16" height="17" viewBox="0 0 16 17"><path d="M1.5 6V2.7L2.1 2H6.2L7 2.8H14L14.5 3.4V11H1.5Z" fill="url(#gB)" stroke="#d9a638" stroke-width=".4"/><path d="M2.3 3.5V2.9H5.9L6.5 3.7H13.6V4.8H2.3Z" fill="#fbe98e" opacity=".9"/><path d="M1.8 6.6L14.3 4.1L14.1 12.6L2.1 15Z" fill="url(#gF)" stroke="#e0b040" stroke-width=".7" stroke-linejoin="round"/><path d="M2.1 15.1L14.1 12.7" stroke="#cf9a2c" stroke-width=".8" fill="none"/></svg><span class="tl" style="left:43.3px;top:336px">Quaternion</span><div class="pm" style="left:7px;top:356px"><i class="h"></i><i class="v"></i></div><div class="dh" style="left:17px;top:360px;width:6px"></div><svg class="fo" style="left:22px;top:352px" width="16" height="17" viewBox="0 0 16 17"><path d="M1.5 6V2.7L2.1 2H6.2L7 2.8H14L14.5 3.4V11H1.5Z" fill="url(#gB)" stroke="#d9a638" stroke-width=".4"/><path d="M2.3 3.5V2.9H5.9L6.5 3.7H13.6V4.8H2.3Z" fill="#fbe98e" opacity=".9"/><path d="M1.8 6.6L14.3 4.1L14.1 12.6L2.1 15Z" fill="url(#gF)" stroke="#e0b040" stroke-width=".7" stroke-linejoin="round"/><path d="M2.1 15.1L14.1 12.7" stroke="#cf9a2c" stroke-width=".8" fill="none"/></svg><span class="tl" style="left:43.3px;top:352px">Random</span><div class="pm" style="left:7px;top:372px"><i class="h"></i><i class="v"></i></div><div class="dh" style="left:17px;top:376px;width:6px"></div><svg class="fo" style="left:22px;top:368px" width="16" height="17" viewBox="0 0 16 17"><path d="M1.5 6V2.7L2.1 2H6.2L7 2.8H14L14.5 3.4V11H1.5Z" fill="url(#gB)" stroke="#d9a638" stroke-width=".4"/><path d="M2.3 3.5V2.9H5.9L6.5 3.7H13.6V4.8H2.3Z" fill="#fbe98e" opacity=".9"/><path d="M1.8 6.6L14.3 4.1L14.1 12.6L2.1 15Z" fill="url(#gF)" stroke="#e0b040" stroke-width=".7" stroke-linejoin="round"/><path d="M2.1 15.1L14.1 12.7" stroke="#cf9a2c" stroke-width=".8" fill="none"/></svg><span class="tl" style="left:43.3px;top:368px">Repeat</span><div class="pm" style="left:7px;top:388px"><i class="h"></i><i class="v"></i></div><div class="dh" style="left:17px;top:392px;width:6px"></div><svg class="fo" style="left:22px;top:384px" width="16" height="17" viewBox="0 0 16 17"><path d="M1.5 6V2.7L2.1 2H6.2L7 2.8H14L14.5 3.4V11H1.5Z" fill="url(#gB)" stroke="#d9a638" stroke-width=".4"/><path d="M2.3 3.5V2.9H5.9L6.5 3.7H13.6V4.8H2.3Z" fill="#fbe98e" opacity=".9"/><path d="M1.8 6.6L14.3 4.1L14.1 12.6L2.1 15Z" fill="url(#gF)" stroke="#e0b040" stroke-width=".7" stroke-linejoin="round"/><path d="M2.1 15.1L14.1 12.7" stroke="#cf9a2c" stroke-width=".8" fill="none"/></svg><span class="tl" style="left:43.3px;top:384px">Scope</span><div class="pm" style="left:7px;top:404px"><i class="h"></i><i class="v"></i></div><div class="dh" style="left:17px;top:408px;width:6px"></div><svg class="fo" style="left:22px;top:400px" width="16" height="17" viewBox="0 0 16 17"><path d="M1.5 6V2.7L2.1 2H6.2L7 2.8H14L14.5 3.4V11H1.5Z" fill="url(#gB)" stroke="#d9a638" stroke-width=".4"/><path d="M2.3 3.5V2.9H5.9L6.5 3.7H13.6V4.8H2.3Z" fill="#fbe98e" opacity=".9"/><path d="M1.8 6.6L14.3 4.1L14.1 12.6L2.1 15Z" fill="url(#gF)" stroke="#e0b040" stroke-width=".7" stroke-linejoin="round"/><path d="M2.1 15.1L14.1 12.7" stroke="#cf9a2c" stroke-width=".8" fill="none"/></svg><span class="tl" style="left:43.3px;top:400px">Stream</span></div>
<div id="sb"><div id="sbup" style="top:0"><svg style="position:absolute;left:4px;top:6px" width="8" height="5" viewBox="0 0 8 5"><path d="M.5 4.5L4 .8L7.5 4.5Z" fill="#333"/></svg></div>
<div id="thumb"><svg style="position:absolute;left:3px;top:150px" width="8" height="9" viewBox="0 0 8 9"><path d="M0 .5H8M0 3.5H8M0 6.5H8" stroke="#6a6a6a" stroke-width="1"/><path d="M0 1.5H8M0 4.5H8M0 7.5H8" stroke="#fff" stroke-width="1"/></svg></div>
<div id="sbdn" style="top:391px"><svg style="position:absolute;left:4px;top:7px" width="8" height="5" viewBox="0 0 8 5"><path d="M.5 .5L4 4.2L7.5 .5Z" fill="#333"/></svg></div></div>
</div>
<div id="rsh"></div><div id="rsh2"></div><div id="bottom"></div>
</body></html>
